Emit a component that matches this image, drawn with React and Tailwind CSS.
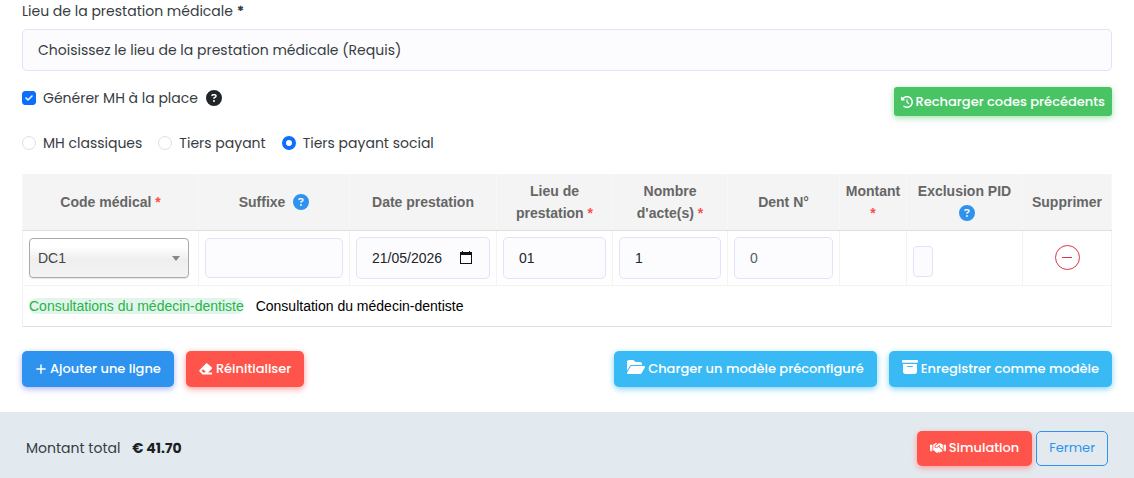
import React, { useState } from 'react'
import { FaPlus, FaFolderOpen, FaHandshake, FaClockRotateLeft, FaCircleQuestion, FaCheck } from 'react-icons/fa6'
import { BsArchiveFill } from 'react-icons/bs'

const modes = [
    { id: 'classic', label: 'MH classiques' },
    { id: 'tiers', label: 'Tiers payant' },
    { id: 'social', label: 'Tiers payant social' },
]

const th = "border-x border-[#f8f8f8] border-b border-b-[#dee0e0] px-1 font-bold text-[#666] leading-[22px]"
const td = "border border-[#f3f3f3] px-[6px]"
const field = "block w-full rounded-[5px] border border-[#e2e2fb] bg-[#fcfcff] px-[15px] text-[14px] text-[#212529]"
const btn = "flex items-center gap-[3px] rounded-[5px] px-[13px] text-[13px] font-medium text-white"

const Star = () => <span className="text-[#ff4d49]">*</span>

const Help = () => (
    <button type="button" aria-label="Aide" className="ml-1 inline-block align-text-bottom text-[#2d93ee]">
        <FaCircleQuestion className="size-4" />
    </button>
)

const CalendarIcon = () => (
    <svg viewBox="0 0 12 13" className="h-[13px] w-3" aria-hidden="true">
        <path d="M0 1h2V0h1v1h6V0h1v1h2v12H0zM1 4V12h10V4z" fill="#111" fillRule="evenodd" />
    </svg>
)

const EraserIcon = () => (
    <svg viewBox="0 0 14 12" className="h-3 w-[14px]" aria-hidden="true">
        <path d="M7 .6a1 1 0 0 1 1.4 0L12.6 4.3a1.2 1.2 0 0 1 0 1.7L9 9.5h4v2H3.600L.8 8.8a1.4 1.4 0 0 1 0-2zM4 6.200 2.500 7.800l1.800 1.700h1.500l.9-.9z" fill="currentColor" fillRule="evenodd" />
    </svg>
)

const App = () => {
    const [mode, setMode] = useState('social');
    const [generate, setGenerate] = useState(true);
    const [date, setDate] = useState('21/05/2026');

    return (
        <div className="bg-white font-[Poppins,Inter,sans-serif] text-[14px] leading-[22px] text-[#373c42]">
            <form className="px-[22px] pb-[25px]" autoComplete="off">
                <label htmlFor="lieu" className="block">Lieu de la prestation médicale <b>*</b></label>
                <select id="lieu" className="mt-[7px] block h-[42px] w-full appearance-none rounded-[5px] border border-[#e2e2fb] bg-[#fcfcff] px-[15px]">
                    <option>Choisissez le lieu de la prestation médicale (Requis)</option>
                </select>

                <div className="mt-4 flex items-start justify-between">
                    <div className="flex items-center">
                        <label className="flex items-center gap-[7px]">
                            <span className="relative size-[14px]">
                                <input type="checkbox" checked={generate} onChange={e => setGenerate(e.target.checked)}
                                    className="block size-[14px] appearance-none rounded-[3px] border border-[#dee0e3] checked:border-[#0d6efd] checked:bg-[#0d6efd]" />
                                {generate && <FaCheck className="pointer-events-none absolute inset-[3px] size-2 stroke-white stroke-[40px] text-white" />}
                            </span>
                            Générer MH à la place
                        </label>
                        <button type="button" aria-label="Aide" className="ml-2 text-[#212529]"><FaCircleQuestion className="size-4" /></button>
                    </div>
                    <button type="button" className="flex h-[29px] items-center gap-[3px] rounded-[3px] bg-[#49c464] px-[7px] text-[13px] font-medium text-white shadow-[0_2px_6px_#49c46480]">
                        <FaClockRotateLeft className="size-3" /> Recharger codes précédents
                    </button>
                </div>

                <div className="mt-4 flex gap-4">
                    {modes.map(item => (
                        <label key={item.id} className="flex items-center gap-[7px]">
                            <input type="radio" name="mode" checked={mode === item.id} onChange={() => setMode(item.id)}
                                className="size-[14px] appearance-none rounded-full border border-[#dee0e3] bg-white checked:border-4 checked:border-[#0d6efd]" />
                            {item.label}
                        </label>
                    ))}
                </div>

                <table className="mt-5 w-full table-fixed border-collapse border-b border-[#dee0e0] font-['Liberation_Sans',Arial,sans-serif] text-[14px]">
                    <colgroup>
                        <col className="w-[176px]" />
                        <col className="w-[151px]" />
                        <col className="w-[147px]" />
                        <col className="w-[116px]" />
                        <col className="w-[115px]" />
                        <col className="w-[112px]" />
                        <col className="w-[67px]" />
                        <col className="w-[116px]" />
                        <col className="w-[89px]" />
                    </colgroup>
                    <thead className="bg-[#f4f4f4]">
                        <tr className="h-14">
                            <th className={th}>Code médical <Star /></th>
                            <th className={th}>Suffixe <Help /></th>
                            <th className={th}>Date prestation</th>
                            <th className={th}>Lieu de<br />prestation <Star /></th>
                            <th className={th}>Nombre<br />d'acte(s) <Star /></th>
                            <th className={th}>Dent N°</th>
                            <th className={th}>Montant<br /><Star /></th>
                            <th className={th}>Exclusion PID <Help /></th>
                            <th className={th}>Supprimer</th>
                        </tr>
                    </thead>
                    <tbody>
                        <tr className="h-[55px]">
                            <td className={td}>
                                <div className="relative">
                                    <select aria-label="Code médical" className="block h-10 w-[160px] appearance-none rounded-[4px] border border-[#aaa] bg-linear-to-b from-white from-20% via-[#eee] via-55% to-[#f4f4f4] px-2 text-[#444] shadow-[0_1px_1px_#0000001a]">
                                        <option>DC1</option>
                                    </select>
                                    <span className="pointer-events-none absolute top-[18px] left-[143px] border-x-4 border-t-[5px] border-x-transparent border-t-[#888]" />
                                </div>
                            </td>
                            <td className={td}><input aria-label="Suffixe" className={field + " h-10"} /></td>
                            <td className={td}>
                                <div className="relative">
                                    <input aria-label="Date prestation" value={date} onChange={e => setDate(e.target.value)} className={field + " h-[42px]"} />
                                    <button type="button" aria-label="Ouvrir le calendrier" className="absolute inset-y-0 right-[18px] flex items-center"><CalendarIcon /></button>
                                </div>
                            </td>
                            <td className={td}><input aria-label="Lieu de prestation" defaultValue="01" className={field + " h-[42px]"} /></td>
                            <td className={td}><input aria-label="Nombre d'actes" defaultValue="1" className={field + " h-[42px]"} /></td>
                            <td className={td}><input aria-label="Dent N°" placeholder="0" className={field + " h-[42px] placeholder:text-[#595c5f]"} /></td>
                            <td className={td}></td>
                            <td className={td}><input type="checkbox" aria-label="Exclusion PID" className="mt-[7px] block h-[31px] w-5 appearance-none rounded-[4px] border border-[#e2e2fb] bg-[#fcfcff]" /></td>
                            <td className={td}>
                                <button type="button" aria-label="Supprimer" className="mx-auto flex size-[25px] items-center justify-center rounded-full border border-[#dc3545]">
                                    <span className="h-px w-[10px] bg-[#dc3545]" />
                                </button>
                            </td>
                        </tr>
                        <tr className="h-[41px]">
                            <td colSpan={9} className="border-x border-[#f3f3f3] px-[6px] text-black">
                                <span className="mr-2 rounded-full bg-[#e2f5ec] text-[#28b446]">Consultations du médecin-dentiste</span>
                                {' '}Consultation du médecin-dentiste
                            </td>
                        </tr>
                    </tbody>
                </table>

                <div className="mt-6 flex justify-between">
                    <div className="flex gap-3">
                        <button type="button" className={btn + " h-9 bg-[#2d93ee] shadow-[0_2px_6px_#acb5f6]"}><FaPlus className="size-3" /> Ajouter une ligne</button>
                        <button type="button" className={btn + " h-9 bg-[#ff544b] shadow-[0_2px_6px_#fd9b96]"}><EraserIcon /> Réinitialiser</button>
                    </div>
                    <div className="flex gap-3">
                        <button type="button" className={btn + " h-9 bg-[#3abaf4] shadow-[0_2px_6px_#82d3f8]"}><FaFolderOpen className="mb-1 size-[18px]" /> Charger un modèle préconfiguré</button>
                        <button type="button" className={btn + " h-9 bg-[#3abaf4] shadow-[0_2px_6px_#82d3f8]"}><BsArchiveFill className="mb-1 size-4" /> Enregistrer comme modèle</button>
                    </div>
                </div>
            </form>

            <footer className="flex h-[66px] items-center justify-between bg-[#e3eaef] px-[26px] pt-[7px]">
                <div>Montant total <b className="ml-2 text-[#1b1e22]">€ 41.70</b></div>
                <div className="flex gap-1">
                    <button type="button" className={btn + " h-[35px] bg-[#ff544b] shadow-[0_2px_6px_#fd9b96]"}><FaHandshake className="size-4" /> Simulation</button>
                    <button type="button" className="h-[35px] rounded-[5px] border border-[#2d93ee] px-3 text-[13px] text-[#2d93ee]">Fermer</button>
                </div>
            </footer>
        </div>
    )
}

export default App
